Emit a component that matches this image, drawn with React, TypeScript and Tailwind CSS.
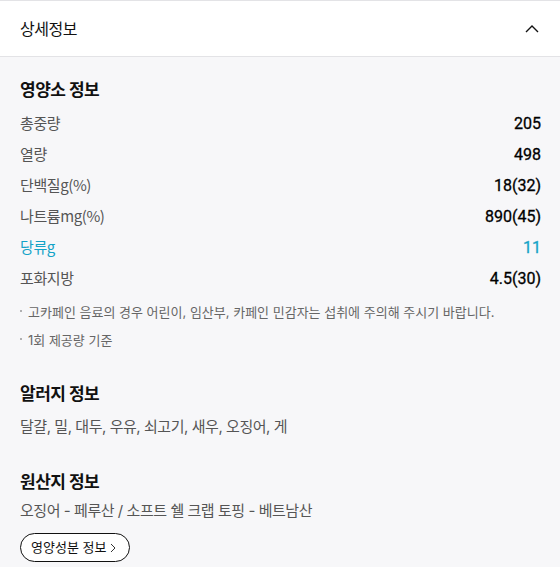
import React from 'react'

const NUTRITION = [
  { label: '총중량', value: '205' },
  { label: '열량', value: '498' },
  { label: '단백질g(%)', value: '18(32)' },
  { label: '나트륨mg(%)', value: '890(45)' },
  { label: '당류g', value: '11', highlight: true },
  { label: '포화지방', value: '4.5(30)' },
]

const NOTES = [
  '고카페인 음료의 경우 어린이, 임산부, 카페인 민감자는 섭취에 주의해 주시기 바랍니다.',
  '1회 제공량 기준',
]

const font = { fontFamily: 'Inter, "Noto Sans CJK KR", sans-serif' }

export default function App() {
  return (
    <main style={font} className="w-[560px] h-[567px] bg-[#f7f7f9] text-[#111] overflow-hidden">
      {/* Header */}
      <div className="bg-white border-t border-b border-[#e3e3e6] h-[57px] flex items-center justify-between pl-5 pr-[21px]">
        <h2 className="text-[16px] tracking-[-0.5px] text-[#111]">상세정보</h2>
        <svg width="14" height="8" viewBox="0 0 14 8" fill="none">
          <path d="M1 7 L7 1 L13 7" stroke="#111" strokeWidth="1.4" />
        </svg>
      </div>

      <div className="pl-5 pr-[19px] pt-[21px]">
        {/* Nutrition */}
        <h3 className="text-[17px] leading-[24px] font-bold tracking-[-0.5px]">영양소 정보</h3>
        <div className="mt-[6px]">
          {NUTRITION.map(n => (
            <div key={n.label} className="h-[31px] flex items-center justify-between">
              <span className={`font-['Noto_Sans_CJK_KR',sans-serif] text-[15px] tracking-[-0.4px] ${n.highlight ? 'text-[#14a3c7]' : 'text-[#555]'}`}>{n.label}</span>
              <span className={`font-['Roboto',sans-serif] text-[16px] font-normal [-webkit-text-stroke:0.3px] ${n.highlight ? 'text-[#14a3c7]' : 'text-black'}`}>{n.value}</span>
            </div>
          ))}
        </div>
        <div className="mt-[4px]">
          {NOTES.map(t => (
            <div key={t} className="flex items-center gap-[6px] leading-[28px] text-[13px] text-[#666]">
              <span className="w-[2px] h-[2px] bg-[#999] rounded-full -mt-[2px]" />
              <span>{t}</span>
            </div>
          ))}
        </div>

        {/* Allergy */}
        <h3 className="mt-[28px] text-[17px] leading-[24px] font-bold tracking-[-0.5px]">알러지 정보</h3>
        <p className="mt-[9px] text-[15px] leading-[24px] tracking-[-0.45px] text-[#555]">
          달걀, 밀, 대두, 우유, 쇠고기, 새우, 오징어, 게
        </p>

        {/* Origin */}
        <h3 className="mt-[31px] text-[17px] leading-[24px] font-bold tracking-[-0.5px]">원산지 정보</h3>
        <p className="mt-[5px] text-[15px] leading-[24px] tracking-[-0.45px] text-[#555]">
          오징어 - 페루산 / 소프트 쉘 크랩 토핑 - 베트남산
        </p>
        <button className="mt-[10px] h-[29px] inline-flex items-center gap-[4px] pl-[10px] pr-[13px] border border-[#111] rounded-full bg-white text-[13px] text-[#111]">
          <span>영양성분 정보</span>
          <svg width="6" height="10" viewBox="0 0 6 10" fill="none">
            <path d="M1 1 L5 5 L1 9" stroke="#333" strokeWidth="1" />
          </svg>
        </button>
      </div>
    </main>
  )
}
